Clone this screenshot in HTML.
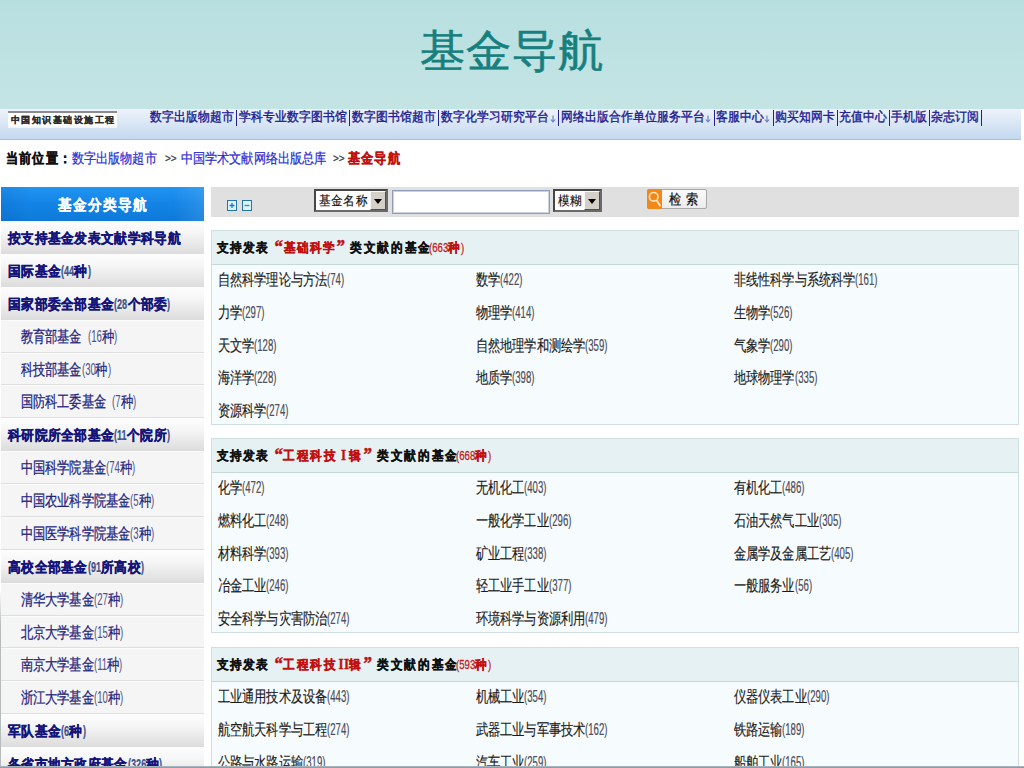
<!DOCTYPE html>
<html><head><meta charset="utf-8">
<style>
*{margin:0;padding:0;box-sizing:border-box}
html,body{width:1024px;height:768px;overflow:hidden;background:#fff;font-family:"Liberation Sans",sans-serif;position:relative}
.abs{position:absolute}
#hdr{left:0;top:0;width:1024px;height:109px;background:linear-gradient(#b8dfe0,#c4e4e4)}
#title{left:0;top:23px;width:1024px;text-align:center;font-size:45px;line-height:56px;color:#17807e;letter-spacing:1px;font-family:"Liberation Serif",serif;transform:scaleY(0.97);-webkit-text-stroke:0.6px #17807e}
#nav{left:0;top:109px;width:1021px;height:31px;background:linear-gradient(#edf2fa,#dde8f5 40%,#c3d8ef);border-bottom:1px solid #a9c1dc}
#logo{left:8px;top:111px;width:109px;height:17px;background:linear-gradient(#fff,#fff 80%,#eef2f8);border-top:2px solid #8c8c8c;font-size:9px;line-height:14px;color:#2a2a2a;font-weight:bold;-webkit-text-stroke:0.15px #2a2a2a;letter-spacing:1.55px;padding-left:2.5px;white-space:nowrap;overflow:hidden}
.nv{position:absolute;top:110px;font-size:12px;line-height:14px;color:#1c1c92;white-space:nowrap;transform:scaleY(1.1);-webkit-text-stroke:0.35px #1c1c92}
.nv.bar{font-size:13px;-webkit-text-stroke:0.3px #1c1c92;top:108px;margin-left:-1.5px}
.nv.arr{font-size:10px;top:112px;color:#6a7ab0;-webkit-text-stroke:0;margin-left:-1px}
.cb{position:absolute;top:149.5px;font-size:12px;line-height:16px;white-space:nowrap;transform:scaleY(1.15)}
.cb.k{color:#111;font-weight:bold;letter-spacing:1.2px;-webkit-text-stroke:0.3px #111}
.cb.l{color:#2b2bd0;letter-spacing:0.1px;-webkit-text-stroke:0.2px #2b2bd0}
.cb.g{color:#404040;font-size:10px;top:151px;-webkit-text-stroke:0.25px #404040}
.cb.r{color:#c01010;font-weight:bold;letter-spacing:1.2px;-webkit-text-stroke:0.3px #c01010}
#sidehd{left:1px;top:187px;width:203px;height:34px;background:linear-gradient(90deg,rgba(0,60,140,.12),rgba(0,0,0,0) 15%,rgba(0,0,0,0) 85%,rgba(255,255,255,.1)),linear-gradient(#2194f2,#1384e6 50%,#0e7ad8)}
#sidehd span{position:absolute;left:0;width:203px;top:10px;text-align:center;color:#fff;font-size:14px;line-height:16px;font-weight:bold;letter-spacing:1px;transform:scaleY(1.1);-webkit-text-stroke:0.15px #fff}
.it{position:absolute;left:1px;width:203px;height:33px;overflow:hidden}
.it.b{background:linear-gradient(#fdfdfd,#f6f6f6 35%,#dcdcdc)}
.it.s{background:#f5f5f5;border-top:1px solid #fbfbfb;border-bottom:1px solid #dedede}
.it .t{position:absolute;top:9px;line-height:16px;font-size:12px;white-space:nowrap}
.it.b .t{left:7px;top:10px;font-size:13px;font-weight:bold;letter-spacing:0.3px;color:#14147a;transform:scaleY(1.1);-webkit-text-stroke:0.3px #14147a}
.it.s .t{left:20px;top:8px;color:#22227e;letter-spacing:0.12px;transform:scaleY(1.3);-webkit-text-stroke:0.2px #22227e}
.n{display:inline-block;transform:scaleX(0.8);transform-origin:0 50%;letter-spacing:0}
.it.b .n{color:#40508a;font-weight:bold;transform:scaleX(0.7);-webkit-text-stroke:0.2px #40508a}
.it.s .n{color:#50508a;-webkit-text-stroke:0}
#sbar{left:211px;top:187px;width:808px;height:30px;background:#e0e0e0}
.pm{top:200px;width:9.5px;height:11px;border:1px solid #2a74a4;background:#d8f6ff}
.sel{top:189px;height:23px;background:#fff;border:2px solid #464646;border-right-color:#6a6a6a;border-bottom-color:#6a6a6a;font-size:13px;line-height:19px;padding-left:3px;color:#111;white-space:nowrap}
.st{display:inline-block;font-size:12px;line-height:19px;transform:scaleY(1.12);letter-spacing:0.2px;-webkit-text-stroke:0.15px #111}
.sel .btn{position:absolute;right:0;top:0;width:16px;height:19px;background:#d4d0c8;border:1px solid #f8f8f8;border-right:1px solid #505050;border-bottom:1px solid #505050}
.sel .btn:after{content:"";position:absolute;left:3px;top:7px;border-left:4px solid transparent;border-right:4px solid transparent;border-top:5px solid #000}
#inp{left:392px;top:190px;width:158px;height:24px;background:#fff;border:1px solid #8e9eb8;box-shadow:0 0 0 1px #c8d4e2 inset}
#srch{left:647px;top:188.5px;width:60px;height:20px;background:linear-gradient(#fafafa,#ececec);border:1px solid #a8a8a8;border-radius:2px;font-size:12px;line-height:18px;color:#111;padding-left:20.5px;letter-spacing:0.85px}
#srch .ic{position:absolute;left:-1px;top:-1px}
#srch .tx{display:inline-block;transform:scaleY(1.15);-webkit-text-stroke:0.2px #111}
.sec{left:211px;width:808px;height:195px;background:#f6fbfd;border:1px solid #cfdfe0}
.sec .h{position:absolute;left:0;top:0;width:806px;height:34px;background:#e6f1f4;border-bottom:1px solid #c4d8d8}
.hp{position:absolute;top:10px;font-size:12px;line-height:16px;font-weight:bold;color:#111;white-space:nowrap;transform:scaleY(1.12);letter-spacing:0.65px;-webkit-text-stroke:0.3px #111}
.hp.r{color:#c01010;-webkit-text-stroke:0.3px #c01010}
.hp.q{font-family:"Liberation Serif",serif;font-size:17px;-webkit-text-stroke:0.5px #c01010}
.hp.rn{font-family:"Liberation Serif",serif;font-size:13px;letter-spacing:0.5px}
.hp .n{font-weight:normal;color:#c41a1a;-webkit-text-stroke:0.3px #c41a1a}
.cell{position:absolute;font-size:12px;line-height:16px;color:#1a1a1a;letter-spacing:0.12px;white-space:nowrap;transform:scaleY(1.3);-webkit-text-stroke:0.12px #1a1a1a}
.cell .n{color:#505060}
#bot{left:0;top:766px;width:1024px;height:2px;background:linear-gradient(#b4c0c8,#8090a0)}
</style></head><body>
<div id="hdr" class="abs"></div>
<div id="title" class="abs">基金导航</div>
<div id="nav" class="abs"></div>
<div id="logo" class="abs">中国知识基础设施工程</div>
<span class="nv" style="left:150px">数字出版物超市</span>
<div class="abs" style="left:236.3px;top:110px;width:1px;height:16px;background:#22228a"></div>
<span class="nv" style="left:239px">学科专业数字图书馆</span>
<div class="abs" style="left:349.3px;top:110px;width:1px;height:16px;background:#22228a"></div>
<span class="nv" style="left:352px">数字图书馆超市</span>
<div class="abs" style="left:438.3px;top:110px;width:1px;height:16px;background:#22228a"></div>
<span class="nv" style="left:441px">数字化学习研究平台</span>
<svg class="abs" style="left:549.5px;top:115px" width="6" height="8" viewBox="0 0 6 8"><path d="M3 0.5V7M0.8 4.5L3 7L5.2 4.5" stroke="#6a7ab8" stroke-width="1.1" fill="none"/></svg>
<div class="abs" style="left:558.3px;top:110px;width:1px;height:16px;background:#22228a"></div>
<span class="nv" style="left:560.7px">网络出版合作单位服务平台</span>
<svg class="abs" style="left:704.5px;top:115px" width="6" height="8" viewBox="0 0 6 8"><path d="M3 0.5V7M0.8 4.5L3 7L5.2 4.5" stroke="#6a7ab8" stroke-width="1.1" fill="none"/></svg>
<div class="abs" style="left:713.8px;top:110px;width:1px;height:16px;background:#22228a"></div>
<span class="nv" style="left:716px">客服中心</span>
<svg class="abs" style="left:763.5px;top:115px" width="6" height="8" viewBox="0 0 6 8"><path d="M3 0.5V7M0.8 4.5L3 7L5.2 4.5" stroke="#6a7ab8" stroke-width="1.1" fill="none"/></svg>
<div class="abs" style="left:772.8px;top:110px;width:1px;height:16px;background:#22228a"></div>
<span class="nv" style="left:775px">购买知网卡</span>
<div class="abs" style="left:837.3px;top:110px;width:1px;height:16px;background:#22228a"></div>
<span class="nv" style="left:839px">充值中心</span>
<div class="abs" style="left:889.3px;top:110px;width:1px;height:16px;background:#22228a"></div>
<span class="nv" style="left:891px">手机版</span>
<div class="abs" style="left:928.8px;top:110px;width:1px;height:16px;background:#22228a"></div>
<span class="nv" style="left:931px">杂志订阅</span>
<div class="abs" style="left:980.8px;top:110px;width:1px;height:16px;background:#22228a"></div>
<span class="cb k" style="left:6px">当前位置</span><span class="cb k" style="left:58.5px">：</span>
<span class="cb l" style="left:72px">数字出版物超市</span><span class="cb g" style="left:165px">&gt;&gt;</span>
<span class="cb l" style="left:181px">中国学术文献网络出版总库</span><span class="cb g" style="left:333px">&gt;&gt;</span>
<span class="cb r" style="left:348px">基金导航</span>
<div id="sidehd" class="abs"><span>基金分类导航</span></div>
<div class="it b" style="top:221.000px;height:32.875px"><span class="t">按支持基金发表文献学科导航</span></div>
<div class="it b" style="top:253.875px;height:32.875px"><span class="t">国际基金<span class="n" style="margin-right:-5.64px">(44</span>种<span class="n" style="margin-right:-1.30px">)</span></span></div>
<div class="it b" style="top:286.750px;height:32.875px"><span class="t">国家部委全部基金<span class="n" style="margin-right:-5.64px">(28</span>个部委<span class="n" style="margin-right:-1.30px">)</span></span></div>
<div class="it s" style="top:319.625px;height:32.875px"><span class="t">教育部基金&ensp;<span class="n" style="margin-right:-3.47px">(16</span>种<span class="n" style="margin-right:-0.80px">)</span></span></div>
<div class="it s" style="top:352.500px;height:32.875px"><span class="t">科技部基金<span class="n" style="margin-right:-3.47px">(30</span>种<span class="n" style="margin-right:-0.80px">)</span></span></div>
<div class="it s" style="top:385.375px;height:32.875px"><span class="t">国防科工委基金&ensp;<span class="n" style="margin-right:-2.13px">(7</span>种<span class="n" style="margin-right:-0.80px">)</span></span></div>
<div class="it b" style="top:418.250px;height:32.875px"><span class="t">科研院所全部基金<span class="n" style="margin-right:-5.42px">(11</span>个院所<span class="n" style="margin-right:-1.30px">)</span></span></div>
<div class="it s" style="top:451.125px;height:32.875px"><span class="t">中国科学院基金<span class="n" style="margin-right:-3.47px">(74</span>种<span class="n" style="margin-right:-0.80px">)</span></span></div>
<div class="it s" style="top:484.000px;height:32.875px"><span class="t">中国农业科学院基金<span class="n" style="margin-right:-2.13px">(5</span>种<span class="n" style="margin-right:-0.80px">)</span></span></div>
<div class="it s" style="top:516.875px;height:32.875px"><span class="t">中国医学科学院基金<span class="n" style="margin-right:-2.13px">(3</span>种<span class="n" style="margin-right:-0.80px">)</span></span></div>
<div class="it b" style="top:549.750px;height:32.875px"><span class="t">高校全部基金<span class="n" style="margin-right:-5.64px">(91</span>所高校<span class="n" style="margin-right:-1.30px">)</span></span></div>
<div class="it s" style="top:582.625px;height:32.875px"><span class="t">清华大学基金<span class="n" style="margin-right:-3.47px">(27</span>种<span class="n" style="margin-right:-0.80px">)</span></span></div>
<div class="it s" style="top:615.500px;height:32.875px"><span class="t">北京大学基金<span class="n" style="margin-right:-3.47px">(15</span>种<span class="n" style="margin-right:-0.80px">)</span></span></div>
<div class="it s" style="top:648.375px;height:32.875px"><span class="t">南京大学基金<span class="n" style="margin-right:-3.29px">(11</span>种<span class="n" style="margin-right:-0.80px">)</span></span></div>
<div class="it s" style="top:681.250px;height:32.875px"><span class="t">浙江大学基金<span class="n" style="margin-right:-3.47px">(10</span>种<span class="n" style="margin-right:-0.80px">)</span></span></div>
<div class="it b" style="top:714.125px;height:32.875px"><span class="t">军队基金<span class="n" style="margin-right:-3.47px">(6</span>种<span class="n" style="margin-right:-1.30px">)</span></span></div>
<div class="it b" style="top:747.000px;height:32.875px"><span class="t">各省市地方政府基金<span class="n" style="margin-right:-7.81px">(326</span>种<span class="n" style="margin-right:-1.30px">)</span></span></div>
<div id="sbar" class="abs"></div>
<div class="pm abs" style="left:227px"><svg width="8" height="9" style="position:absolute;left:0;top:0"><path d="M1.5 4.5H6.5M4 2V7" stroke="#1a78c8" stroke-width="1.3"/></svg></div>
<div class="pm abs" style="left:242px"><svg width="8" height="9" style="position:absolute;left:0;top:0"><path d="M1.5 4.5H6.5" stroke="#4a80b8" stroke-width="1.3"/></svg></div>
<div class="sel abs" style="left:314px;width:74px"><span class="st">基金名称</span><div class="btn"></div></div>
<div id="inp" class="abs"></div>
<div class="sel abs" style="left:553px;width:49px"><span class="st">模糊</span><div class="btn"></div></div>
<div id="srch" class="abs"><svg class="ic" width="15" height="20" viewBox="0 0 15 20"><path d="M2 0H15V20H2Q0 20 0 18V2Q0 0 2 0Z" fill="#f28818"/><circle cx="6.7" cy="7.8" r="4.3" stroke="#ffe4c0" stroke-width="1.6" fill="none"/><path d="M9.6 11.2L13.4 17.2" stroke="#ffe4c0" stroke-width="1.9"/></svg><span class="tx">检 索</span></div>
<div class="sec abs" style="top:230px"><div class="h"></div></div>
<span class="hp abs" style="left:217.4px;top:240px;letter-spacing:0.75px">支持发表</span>
<span class="hp q r abs" style="left:274.5px;top:239px">“</span>
<span class="hp r abs" style="left:283.5px;top:240px;letter-spacing:1.2px">基础科学</span>
<span class="hp q r abs" style="left:336.5px;top:239px">”</span>
<span class="hp abs" style="left:350.0px;top:240px;letter-spacing:1.7px">类文献的基金</span>
<span class="hp r abs" style="left:429.0px;top:240px"><span class="n" style="margin-right:-4.80px">(663</span>种<span class="n" style="margin-right:-0.80px">)</span></span>
<span class="cell abs" style="left:218px;top:272.00px">自然科学理论与方法<span class="n" style="margin-right:-4.27px">(74)</span></span>
<span class="cell abs" style="left:476px;top:272.00px">数学<span class="n" style="margin-right:-5.60px">(422)</span></span>
<span class="cell abs" style="left:734px;top:272.00px">非线性科学与系统科学<span class="n" style="margin-right:-5.60px">(161)</span></span>
<span class="cell abs" style="left:218px;top:304.75px">力学<span class="n" style="margin-right:-5.60px">(297)</span></span>
<span class="cell abs" style="left:476px;top:304.75px">物理学<span class="n" style="margin-right:-5.60px">(414)</span></span>
<span class="cell abs" style="left:734px;top:304.75px">生物学<span class="n" style="margin-right:-5.60px">(526)</span></span>
<span class="cell abs" style="left:218px;top:337.50px">天文学<span class="n" style="margin-right:-5.60px">(128)</span></span>
<span class="cell abs" style="left:476px;top:337.50px">自然地理学和测绘学<span class="n" style="margin-right:-5.60px">(359)</span></span>
<span class="cell abs" style="left:734px;top:337.50px">气象学<span class="n" style="margin-right:-5.60px">(290)</span></span>
<span class="cell abs" style="left:218px;top:370.25px">海洋学<span class="n" style="margin-right:-5.60px">(228)</span></span>
<span class="cell abs" style="left:476px;top:370.25px">地质学<span class="n" style="margin-right:-5.60px">(398)</span></span>
<span class="cell abs" style="left:734px;top:370.25px">地球物理学<span class="n" style="margin-right:-5.60px">(335)</span></span>
<span class="cell abs" style="left:218px;top:403.00px">资源科学<span class="n" style="margin-right:-5.60px">(274)</span></span>
<div class="sec abs" style="top:438px"><div class="h"></div></div>
<span class="hp abs" style="left:217.4px;top:448px;letter-spacing:0.75px">支持发表</span>
<span class="hp q r abs" style="left:274.5px;top:447px">“</span>
<span class="hp r abs" style="left:283.4px;top:448px;letter-spacing:1.55px">工程科技</span>
<span class="hp r rn abs" style="left:341.0px;top:448px">I</span>
<span class="hp r abs" style="left:348.5px;top:448px">辑</span>
<span class="hp q r abs" style="left:363.5px;top:447px">”</span>
<span class="hp abs" style="left:377.0px;top:448px;letter-spacing:1.7px">类文献的基金</span>
<span class="hp r abs" style="left:455.7px;top:448px"><span class="n" style="margin-right:-4.80px">(668</span>种<span class="n" style="margin-right:-0.80px">)</span></span>
<span class="cell abs" style="left:218px;top:480.00px">化学<span class="n" style="margin-right:-5.60px">(472)</span></span>
<span class="cell abs" style="left:476px;top:480.00px">无机化工<span class="n" style="margin-right:-5.60px">(403)</span></span>
<span class="cell abs" style="left:734px;top:480.00px">有机化工<span class="n" style="margin-right:-5.60px">(486)</span></span>
<span class="cell abs" style="left:218px;top:512.75px">燃料化工<span class="n" style="margin-right:-5.60px">(248)</span></span>
<span class="cell abs" style="left:476px;top:512.75px">一般化学工业<span class="n" style="margin-right:-5.60px">(296)</span></span>
<span class="cell abs" style="left:734px;top:512.75px">石油天然气工业<span class="n" style="margin-right:-5.60px">(305)</span></span>
<span class="cell abs" style="left:218px;top:545.50px">材料科学<span class="n" style="margin-right:-5.60px">(393)</span></span>
<span class="cell abs" style="left:476px;top:545.50px">矿业工程<span class="n" style="margin-right:-5.60px">(338)</span></span>
<span class="cell abs" style="left:734px;top:545.50px">金属学及金属工艺<span class="n" style="margin-right:-5.60px">(405)</span></span>
<span class="cell abs" style="left:218px;top:578.25px">冶金工业<span class="n" style="margin-right:-5.60px">(246)</span></span>
<span class="cell abs" style="left:476px;top:578.25px">轻工业手工业<span class="n" style="margin-right:-5.60px">(377)</span></span>
<span class="cell abs" style="left:734px;top:578.25px">一般服务业<span class="n" style="margin-right:-4.27px">(56)</span></span>
<span class="cell abs" style="left:218px;top:611.00px">安全科学与灾害防治<span class="n" style="margin-right:-5.60px">(274)</span></span>
<span class="cell abs" style="left:476px;top:611.00px">环境科学与资源利用<span class="n" style="margin-right:-5.60px">(479)</span></span>
<div class="sec abs" style="top:647px"><div class="h"></div></div>
<span class="hp abs" style="left:217.4px;top:657px;letter-spacing:0.75px">支持发表</span>
<span class="hp q r abs" style="left:274.5px;top:656px">“</span>
<span class="hp r abs" style="left:283.4px;top:657px;letter-spacing:1.55px">工程科技</span>
<span class="hp r rn abs" style="left:338.5px;top:657px">II</span>
<span class="hp r abs" style="left:348.5px;top:657px">辑</span>
<span class="hp q r abs" style="left:363.5px;top:656px">”</span>
<span class="hp abs" style="left:377.0px;top:657px;letter-spacing:1.7px">类文献的基金</span>
<span class="hp r abs" style="left:455.7px;top:657px"><span class="n" style="margin-right:-4.80px">(593</span>种<span class="n" style="margin-right:-0.80px">)</span></span>
<span class="cell abs" style="left:218px;top:689.00px">工业通用技术及设备<span class="n" style="margin-right:-5.60px">(443)</span></span>
<span class="cell abs" style="left:476px;top:689.00px">机械工业<span class="n" style="margin-right:-5.60px">(354)</span></span>
<span class="cell abs" style="left:734px;top:689.00px">仪器仪表工业<span class="n" style="margin-right:-5.60px">(290)</span></span>
<span class="cell abs" style="left:218px;top:721.75px">航空航天科学与工程<span class="n" style="margin-right:-5.60px">(274)</span></span>
<span class="cell abs" style="left:476px;top:721.75px">武器工业与军事技术<span class="n" style="margin-right:-5.60px">(162)</span></span>
<span class="cell abs" style="left:734px;top:721.75px">铁路运输<span class="n" style="margin-right:-5.60px">(189)</span></span>
<span class="cell abs" style="left:218px;top:754.50px">公路与水路运输<span class="n" style="margin-right:-5.60px">(319)</span></span>
<span class="cell abs" style="left:476px;top:754.50px">汽车工业<span class="n" style="margin-right:-5.60px">(259)</span></span>
<span class="cell abs" style="left:734px;top:754.50px">船舶工业<span class="n" style="margin-right:-5.60px">(165)</span></span>
<div class="abs" style="left:0;top:590px;width:1px;height:178px;background:linear-gradient(rgba(150,160,160,0),rgba(150,160,160,.7) 20%)"></div>
<div id="bot" class="abs"></div>
</body></html>
